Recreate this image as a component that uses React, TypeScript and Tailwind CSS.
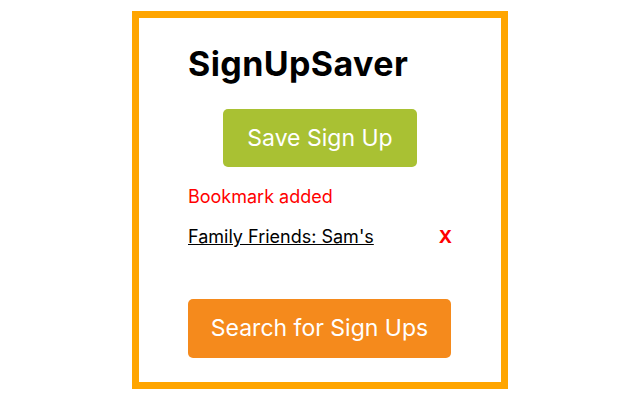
export default function App() {
  return (
    <div className="w-[640px] h-[400px] bg-white flex justify-center pt-[11px]" style={{ fontFamily: "Inter, 'Liberation Sans', sans-serif" }}>
      <div className="w-[376px] h-[378px] border-[7px] border-[#ffa500] px-[49px] flex flex-col">
        <h1 className="mt-[26px] text-[34px] leading-[40px] font-bold text-black tracking-[0.4px]">SignUpSaver</h1>
        <div className="flex justify-center mt-[25px]">
          <button className="w-[194px] h-[58px] rounded-[5px] bg-[#a9c133] text-white text-[23px]">Save Sign Up</button>
        </div>
        <div className="mt-[18px] text-[18px] leading-[24px] text-[#ff0000]">Bookmark added</div>
        <div className="mt-[16px] flex justify-between items-center text-[18px] leading-[24px]">
          <a className="underline text-black">Family Friends: Sam's</a>
          <span className="text-[#ff0000] font-bold">X</span>
        </div>
        <div className="mt-[50px]">
          <button className="w-[263px] h-[59px] rounded-[5px] bg-[#f58a1c] text-white text-[23px]">Search for Sign Ups</button>
        </div>
      </div>
    </div>
  );
}
